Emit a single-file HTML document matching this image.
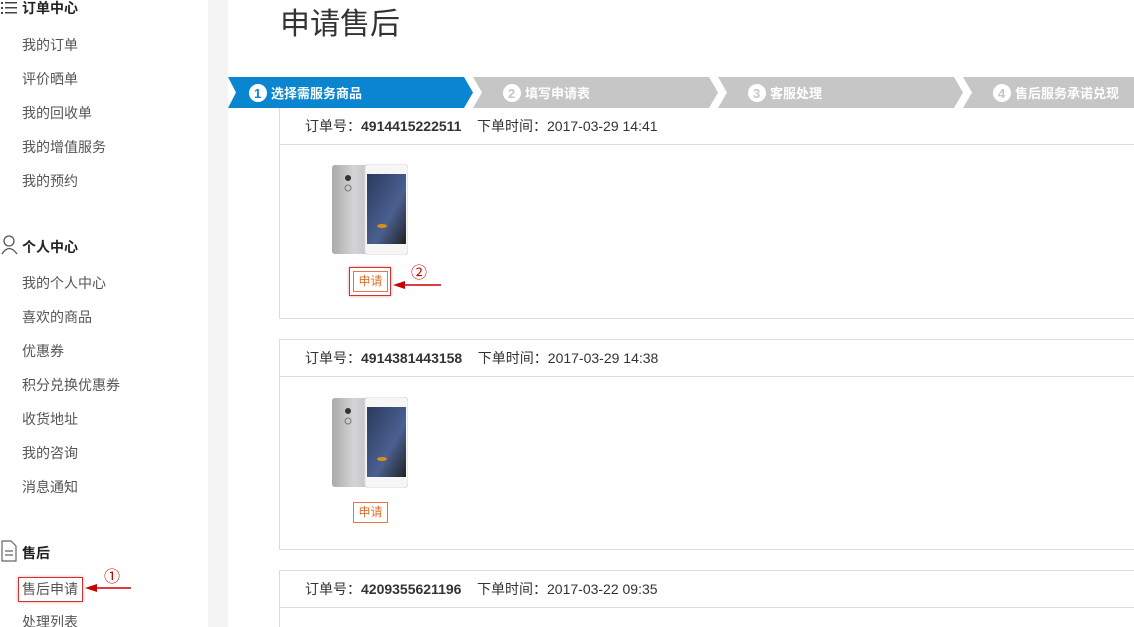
<!DOCTYPE html>
<html><head><meta charset="utf-8"><style>
*{margin:0;padding:0;box-sizing:border-box}
html,body{width:1134px;height:627px;overflow:hidden}
body{background:#fff;font-family:"Liberation Sans","Noto Sans CJK SC",sans-serif;position:relative;color:#333}
.side{position:absolute;left:0;top:0;width:208px;height:627px;background:#fff}
.gap{position:absolute;left:208px;top:0;width:20px;height:627px;background:#f4f4f4}
.h{position:absolute;left:22px;font-size:14px;font-weight:bold;color:#222}
.i{position:absolute;left:22px;font-size:14px;color:#555}
.title{position:absolute;left:280px;top:-1px;font-size:30px;color:#333}
.box{position:absolute;left:279px;width:870px;border:1px solid #ddd;border-top:none}
.box .hd{height:37px;border-bottom:1px solid #ddd;font-size:14px;color:#333;padding-left:25px;line-height:36px}
.box .hd b{font-size:14px}
.phone{position:absolute;left:52px;width:76px;height:91px}
.btn{position:absolute;border:1px solid #e07a40;color:#e0702c;font-size:12px;width:35px;height:21px;line-height:19px;text-align:center;background:#fff}
</style></head><body>
<div class="side">
<svg style="position:absolute;left:1px;top:1px" width="18" height="14"><g fill="#444"><rect x="0" y="1" width="2" height="2"/><rect x="0" y="6" width="2" height="2"/><rect x="0" y="11" width="2" height="2"/><rect x="4" y="1" width="12" height="1.5"/><rect x="4" y="6" width="12" height="1.5"/><rect x="4" y="11" width="12" height="1.5"/></g></svg>
<div class="h" style="top:-2px">订单中心</div>
<div class="i" style="top:35px">我的订单</div>
<div class="i" style="top:69px">评价晒单</div>
<div class="i" style="top:103px">我的回收单</div>
<div class="i" style="top:137px">我的增值服务</div>
<div class="i" style="top:171px">我的预约</div>
<svg style="position:absolute;left:1px;top:235px" width="18" height="20"><circle cx="8" cy="6" r="5" fill="none" stroke="#555" stroke-width="1.3"/><path d="M1 19 Q8 8 16 19" fill="none" stroke="#555" stroke-width="1.3"/></svg>
<div class="h" style="top:237px">个人中心</div>
<div class="i" style="top:273px">我的个人中心</div>
<div class="i" style="top:307px">喜欢的商品</div>
<div class="i" style="top:341px">优惠券</div>
<div class="i" style="top:375px">积分兑换优惠券</div>
<div class="i" style="top:409px">收货地址</div>
<div class="i" style="top:443px">我的咨询</div>
<div class="i" style="top:477px">消息通知</div>
<svg style="position:absolute;left:1px;top:540px" width="16" height="22"><path d="M1 1 H10 L15 6 V21 H1 Z" fill="none" stroke="#666" stroke-width="1.2"/><path d="M4 11 H12 M4 15 H12" stroke="#666" stroke-width="1.2"/></svg>
<div class="h" style="top:543px">售后</div>
<div style="position:absolute;left:18px;top:577px;width:65px;height:25px;border:1.5px solid #c33;box-shadow:0 0 3px #e99"></div>
<div class="i" style="top:579px">售后申请</div>
<div class="i" style="top:612px">处理列表</div>
<div style="position:absolute;left:104px;top:563px;font-size:16px;color:#c00">①</div>
<svg style="position:absolute;left:83px;top:582px" width="50" height="12"><path d="M48 6 H10" stroke="#c00" stroke-width="1.5"/><path d="M2 6 L14 2 L14 10 Z" fill="#c00"/></svg>
</div>
<div class="gap"></div>
<div class="title">申请售后</div>
<svg style="position:absolute;left:228px;top:77px" width="906" height="31">
<polygon points="0,0 236,0 245,15.5 236,31 0,31 8,15.5" fill="#0a86d0"/>
<polygon points="245,0 481,0 490,15.5 481,31 245,31 254,15.5" fill="#c6c6c6"/>
<polygon points="490,0 726,0 735,15.5 726,31 490,31 499,15.5" fill="#c6c6c6"/>
<polygon points="735,0 906,0 906,31 735,31 744,15.5" fill="#c6c6c6"/>
<g fill="#fff" font-family="Liberation Sans,Noto Sans CJK SC,sans-serif" font-weight="bold" font-size="13">
<circle cx="30" cy="16" r="9"/><text x="26" y="21" fill="#0a86d0">1</text><text x="43" y="21">选择需服务商品</text>
<circle cx="284" cy="16" r="9"/><text x="280" y="21" fill="#c6c6c6">2</text><text x="297" y="21">填写申请表</text>
<circle cx="529" cy="16" r="9"/><text x="525" y="21" fill="#c6c6c6">3</text><text x="542" y="21">客服处理</text>
<circle cx="774" cy="16" r="9"/><text x="770" y="21" fill="#c6c6c6">4</text><text x="787" y="21">售后服务承诺兑现</text>
</g></svg>

<svg width="0" height="0" style="position:absolute"><defs><linearGradient id="sc" x1="0" y1="0" x2="1" y2="1"><stop offset="0" stop-color="#2a3a5e"/><stop offset=".6" stop-color="#4a6090"/><stop offset="1" stop-color="#222"/></linearGradient><linearGradient id="bk" x1="0" y1="0" x2="1" y2="0"><stop offset="0" stop-color="#aaa"/><stop offset=".5" stop-color="#d4d4d6"/><stop offset="1" stop-color="#bbb"/></linearGradient></defs></svg>

<div class="box" style="top:108px;height:211px">
<div class="hd">订单号：<b>4914415222511</b>&nbsp;&nbsp;&nbsp;&nbsp;下单时间：2017-03-29 14:41</div>
<svg class="phone" style="top:56px" viewBox="0 0 76 91"><rect x="0" y="1" width="44" height="89" rx="3" fill="url(#bk)"/><rect x="33" y="0" width="43" height="91" rx="4" fill="#f6f6f6" stroke="#ddd"/><rect x="35" y="10" width="39" height="70" fill="url(#sc)"/><ellipse cx="50" cy="62" rx="5" ry="2" fill="#e08a20"/><circle cx="16" cy="14" r="3" fill="#333"/><circle cx="16" cy="24" r="3" fill="none" stroke="#777"/></svg>
<div style="position:absolute;left:69px;top:159px;width:42px;height:29px;border:1.5px solid #c33;box-shadow:0 0 3px #e99"></div>
<div class="btn" style="left:73px;top:163px">申请</div>
<div style="position:absolute;left:131px;top:151px;font-size:16px;color:#c00">②</div>
<svg style="position:absolute;left:111px;top:171px" width="52" height="12"><path d="M50 6 H10" stroke="#c00" stroke-width="1.5"/><path d="M2 6 L14 2 L14 10 Z" fill="#c00"/></svg>
</div>

<div class="box" style="top:339px;height:211px;border-top:1px solid #ddd">
<div class="hd">订单号：<b>4914381443158</b>&nbsp;&nbsp;&nbsp;&nbsp;下单时间：2017-03-29 14:38</div>
<svg class="phone" style="top:57px" viewBox="0 0 76 91"><rect x="0" y="1" width="44" height="89" rx="3" fill="url(#bk)"/><rect x="33" y="0" width="43" height="91" rx="4" fill="#f6f6f6" stroke="#ddd"/><rect x="35" y="10" width="39" height="70" fill="url(#sc)"/><ellipse cx="50" cy="62" rx="5" ry="2" fill="#e08a20"/><circle cx="16" cy="14" r="3" fill="#333"/><circle cx="16" cy="24" r="3" fill="none" stroke="#777"/></svg>
<div class="btn" style="left:73px;top:162px">申请</div>
</div>

<div class="box" style="top:570px;height:70px;border-top:1px solid #ddd">
<div class="hd">订单号：<b>4209355621196</b>&nbsp;&nbsp;&nbsp;&nbsp;下单时间：2017-03-22 09:35</div>
</div>
</body></html>
